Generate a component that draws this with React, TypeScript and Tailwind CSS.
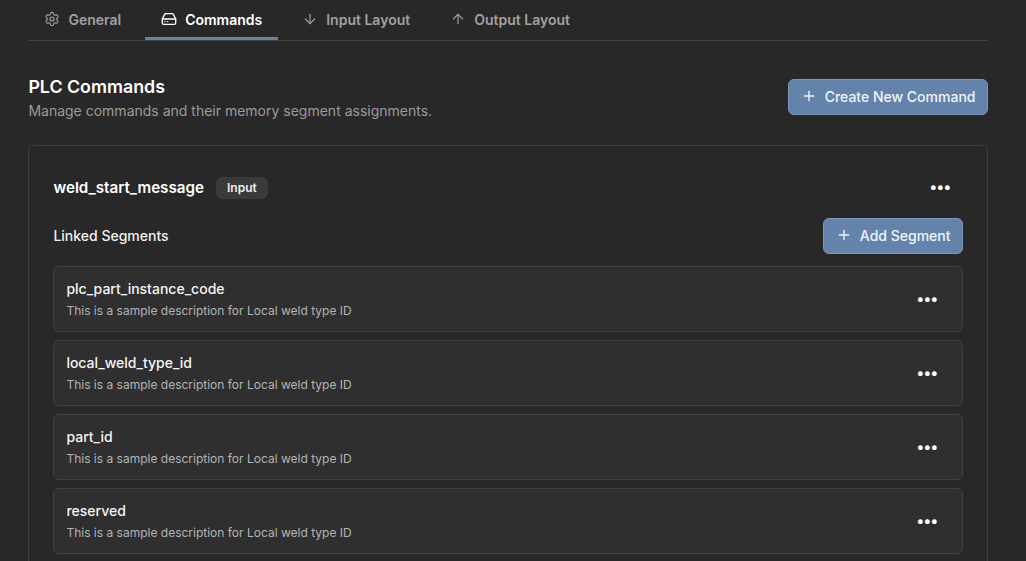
import { Settings, HardDrive, ArrowDown, ArrowUp, Plus } from "lucide-react";

const tabs = [
  { label: "General", Icon: Settings, active: false },
  { label: "Commands", Icon: HardDrive, active: true },
  { label: "Input Layout", Icon: ArrowDown, active: false },
  { label: "Output Layout", Icon: ArrowUp, active: false },
];

const segments = ["plc_part_instance_code", "local_weld_type_id", "part_id", "reserved"];

function Dots({ header }: { header?: boolean }) {
  return (
    <span className={`inline-block text-[15px] leading-none text-white font-bold ${header ? "pb-[4px]" : "pb-[2px]"}`}>
      •••
    </span>
  );
}

function PrimaryButton({ label }: { label: string }) {
  return (
    <button className="h-9 flex items-center gap-2 pl-3 pr-[11.5px] pb-[2px] rounded-md border border-[#7b97ba] bg-[#6483ab] text-[14px] font-medium text-[#f1f5f9]">
      <Plus size={16} strokeWidth={2} />
      {label}
    </button>
  );
}

export default function App() {
  return (
    <div className="h-[561px] overflow-hidden bg-[#282828] font-['Inter',sans-serif]">
      <div className="ml-[28.4px] w-[959.6px]">
        <div className="flex h-[41px] gap-2 border-b border-[#444444]">
          {tabs.map(({ label, Icon, active }) => (
            <div
              key={label}
              className={`flex h-10 items-center gap-2 px-4 pt-[1px] border-b-[3px] text-[14px] font-semibold ${
                active ? "border-[#6483ab] text-white" : "border-transparent text-[#a0a0a0]"
              }`}
            >
              <Icon size={16} strokeWidth={active ? 2 : 1.75} />
              {label}
            </div>
          ))}
        </div>

        <div className="flex items-start justify-between mt-[38px]">
          <div>
            <h2 className="text-[17.8px] leading-[20px] font-semibold text-white mt-[-2px]">PLC Commands</h2>
            <p className="text-[14px] leading-5 mt-1 text-[#9b9b9b]">Manage commands and their memory segment assignments.</p>
          </div>
          <PrimaryButton label="Create New Command" />
        </div>

        <div className="mt-[24px] rounded-md border border-[#3f3f3f] px-6 pt-6 pb-6">
          <div className="flex items-center justify-between h-[36px]">
            <div className="flex items-center gap-3">
              <span className="text-[15.2px] font-semibold text-white">weld_start_message</span>
              <span className="rounded-md bg-[#3a3a3a] px-[11px] py-[3px] text-[12px] leading-4 font-semibold text-[#f0f0f0]">Input</span>
            </div>
            <div className="mr-3 flex items-center"><Dots header /></div>
          </div>
          <div className="flex items-center justify-between mt-3">
            <span className="pb-[2px] text-[14px] font-medium text-[#f0f0f0]">Linked Segments</span>
            <PrimaryButton label="Add Segment" />
          </div>
          <div className="mt-3 flex flex-col gap-2">
            {segments.map((name) => (
              <div key={name} className="h-[66px] flex items-center justify-between rounded-md border border-[#414141] bg-[#2f2f2f] pl-3 pr-6">
                <div>
                  <div className="text-[14px] leading-5 font-medium text-[#f5f5f5]">{name}</div>
                  <div className="text-[12px] leading-4 mt-1 text-[#b4b4b4]">This is a sample description for Local weld type ID</div>
                </div>
                <Dots />
              </div>
            ))}
          </div>
        </div>
      </div>
    </div>
  );
}
